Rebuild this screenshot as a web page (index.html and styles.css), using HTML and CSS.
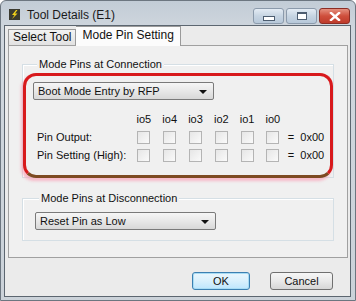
FILE: index.html
```html
<!DOCTYPE html>
<html lang="en">

<head>
    <meta charset="UTF-8" />
    <title>Tool Details (E1)</title>
    <link rel="stylesheet" href="styles.css">
</head>

<body>

    <div class="window">
        <div class="titlebar">
            <svg class="app-icon" width="11" height="11" viewBox="0 0 11 11">
                <rect width="11" height="11" fill="#3b3b30" />
                <path d="M7 1 L3 6 L5.5 6 L3 10 L8.5 4.5 L6 4.5 L8.5 1 Z" fill="#f2d21a" />
            </svg>
            <span class="title">Tool Details (E1)</span>
            <div class="caption-buttons">
                <span class="cap cap-min"><i></i></span>
                <span class="cap cap-max"><i></i></span>
                <span class="cap cap-close">
                    <svg width="12" height="9" viewBox="0 0 12 9">
                        <path d="M2 1 L10 8 M10 1 L2 8" stroke="#fff" stroke-width="2.4" stroke-linecap="square" />
                    </svg>
                </span>
            </div>
        </div>

        <div class="client">
            <div class="tabs">
                <div class="tab">Select Tool</div>
                <div class="tab active">Mode Pin Setting</div>
            </div>

            <div class="panel">
                <div class="group group-connect">
                    <div class="group-title">Mode Pins at Connection</div>
                    <div class="select select-boot">Boot Mode Entry by RFP<span class="arrow"></span></div>

                    <div class="pins">
                        <span></span>
                        <span class="io">io5</span>
                        <span class="io">io4</span>
                        <span class="io">io3</span>
                        <span class="io">io2</span>
                        <span class="io">io1</span>
                        <span class="io">io0</span>
                        <span></span>

                        <span class="pin-label">Pin Output:</span>
                        <span class="check"></span>
                        <span class="check"></span>
                        <span class="check"></span>
                        <span class="check"></span>
                        <span class="check"></span>
                        <span class="check"></span>
                        <span class="value">=  0x00</span>

                        <span class="pin-label">Pin Setting (High):</span>
                        <span class="check"></span>
                        <span class="check"></span>
                        <span class="check"></span>
                        <span class="check"></span>
                        <span class="check"></span>
                        <span class="check"></span>
                        <span class="value">=  0x00</span>
                    </div>

                    <!-- annotation drawn over the group -->
                    <div class="highlight"></div>
                </div>

                <div class="group group-disconnect">
                    <div class="group-title">Mode Pins at Disconnection</div>
                    <div class="select select-reset">Reset Pin as Low<span class="arrow"></span></div>
                </div>
            </div>

            <div class="footer">
                <button class="btn btn-ok">OK</button>
                <button class="btn btn-cancel">Cancel</button>
            </div>
        </div>
    </div>

</body>

</html>
```

FILE: styles.css
```css
body {
    margin: 0;
    background: #ffffff;
    font-family: "Liberation Sans", Arial, sans-serif;
    font-size: 11px;
    color: #111;
}

.window {
    width: 356px;
    height: 301px;
    box-sizing: border-box;
    border: 1px solid #6c7680;
    border-radius: 6px 6px 0 0;
    background: linear-gradient(#c2ccd6, #d0d7de 30px, #cbd2d9);
    padding: 0 4px 3px 3px;
    display: flex;
    flex-direction: column;
}

.titlebar {
    height: 24px;
    display: flex;
    align-items: center;
    padding: 0 0 0 5px;
}

.app-icon {
    margin-right: 7px;
    margin-top: 3px;
}

.title {
    font-size: 12px;
    color: #1a1a1a;
    margin-top: 4px;
}

.caption-buttons {
    margin-left: auto;
    display: flex;
    align-self: flex-start;
    margin-top: 7px;
    margin-right: 1px;
}

.cap {
    width: 29px;
    height: 14px;
    border: 1px solid #8b9aab;
    border-radius: 3px;
    background: linear-gradient(#e4ecf4, #c6d4e2 50%, #b7c8d9);
    display: flex;
    align-items: center;
    justify-content: center;
    margin-left: 2px;
}

.cap-min i {
    width: 10px;
    height: 3px;
    margin-top: 5px;
    background: #fff;
    border: 1px solid #4d5d70;
}

.cap-max i {
    width: 8px;
    height: 5px;
    background: #fff;
    border: 1px solid #4d5d70;
    border-top-width: 2px;
}

.cap-close {
    border-color: #8c2d24;
    background: linear-gradient(#e5907f, #cf4f3c 50%, #be3b2b);
}

.client {
    flex: 1;
    background: #ebebeb;
    border: 1px solid #5c6670;
    display: flex;
    flex-direction: column;
    padding: 0 2px 0 3px;
}

.tabs {
    display: flex;
    align-items: flex-end;
    height: 19px;
}

.tab {
    height: 16px;
    line-height: 15px;
    padding: 0 4px;
    font-size: 12px;
    background: linear-gradient(#f2f2f2, #e2e2e2);
    border: 1px solid #9a9a9a;
    border-bottom: none;
    box-sizing: border-box;
}

.tab.active {
    height: 20px;
    line-height: 17px;
    background: #fcfcfc;
    margin-bottom: -1px;
    padding: 0 6px;
    border-left: none;
    z-index: 1;
}

.panel {
    background: #f0f0f0;
    border: 1px solid #a0a0a0;
    height: 213px;
    box-sizing: border-box;
    padding: 18px 13px 0 13px;
}

.group {
    border: 1px solid #d5dfe5;
    box-shadow: inset 1px 1px 0 #fff;
    position: relative;
}

.group-title {
    width: fit-content;
    margin: -8px 0 0 4px;
    padding: 0 2px;
    line-height: 14px;
    background: #f0f0f0;
}

.group-connect {
    padding: 0 10px 13px 10px;
}

.group-disconnect {
    margin-top: 20px;
    padding: 0 12px 10px 12px;
}

.select {
    width: 181px;
    height: 18px;
    box-sizing: border-box;
    border: 1px solid #7a7a7a;
    border-radius: 2px;
    background: linear-gradient(#f6f6f6, #e8e8e8 50%, #d8d8d8);
    line-height: 16px;
    padding-left: 4px;
    display: flex;
}

.select .arrow {
    margin-left: auto;
    margin-right: 6px;
    margin-top: 7px;
    width: 0;
    height: 0;
    border-left: 4px solid transparent;
    border-right: 4px solid transparent;
    border-top: 4px solid #111;
}

.select-boot {
    margin-top: 11px;
}

.select-reset {
    margin-top: 7px;
}

.pins {
    display: grid;
    grid-template-columns: 94px repeat(6, 25.8px) auto;
    grid-template-rows: repeat(3, 18px);
    align-items: center;
    margin: 10px 0 0 4px;
}

.io {
    text-align: center;
}

.check {
    justify-self: center;
    width: 13px;
    height: 13px;
    box-sizing: border-box;
    border: 1px solid #b4b4b4;
    background: linear-gradient(135deg, #e6e6e6, #fafafa);
}

.value {
    white-space: pre;
    padding-left: 2px;
}

.highlight {
    position: absolute;
    left: 0;
    right: 0;
    top: 8px;
    bottom: -1px;
    border: 3px solid #d8191c;
    border-bottom-color: #7d4a22;
    border-radius: 13px;
    box-shadow: -2px 3px 3px rgba(250, 150, 175, 0.6);
    pointer-events: none;
}

.footer {
    display: flex;
    justify-content: flex-end;
    gap: 20px;
    padding: 14px 15px 0 0;
}

.btn {
    height: 18px;
    box-sizing: border-box;
    font-family: "Liberation Sans", Arial, sans-serif;
    font-size: 11px;
    color: #111;
    border: 1px solid #707070;
    border-radius: 3px;
    background: linear-gradient(#f6f6f6, #e9e9e9 50%, #d6d6d6);
    padding: 0;
}

.btn-ok {
    width: 58px;
    border-color: #3c7fb1;
    box-shadow: inset 0 0 0 1px #a8dcf4;
    background: linear-gradient(#eaf6fd, #d9f0fc 50%, #bee6fd);
}

.btn-cancel {
    width: 63px;
}
```
